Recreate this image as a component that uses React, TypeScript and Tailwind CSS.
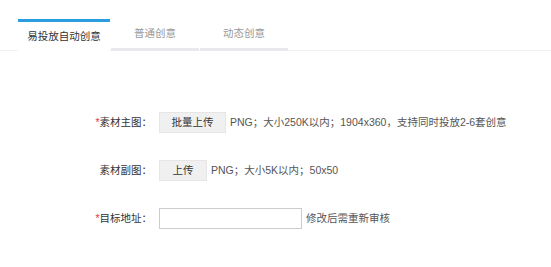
import React from "react";

const font = { fontFamily: '"Liberation Sans", "Noto Sans CJK SC", sans-serif' };

function Row({ label, required, children }: { label: string; required?: boolean; children: React.ReactNode }) {
  return (
    <div className="flex items-center h-[21px]">
      <div className="w-[152px] text-right text-[10.5px] text-[#333] leading-none">
        {required && <span className="text-[#e4393c]">*</span>}
        {label}：
      </div>
      <div className="ml-[7px] flex items-center h-full">{children}</div>
    </div>
  );
}

export default function App() {
  return (
    <div className="w-[551px] h-[267px] bg-white" style={font}>
      <div className="pt-[19px] pl-[18px] flex items-end border-b border-[#f2f2f4]">
        <div className="w-[92px] h-[32px] border-t-[3px] border-[#2a9ee0] flex items-center justify-center text-[10.5px] text-[#333] -mb-px bg-white">
          易投放自动创意
        </div>
        <div className="ml-px w-[88px] h-[32px] border-b-[3px] border-[#e8e8ee] flex items-center justify-center text-[10.5px] text-[#999] -mb-px">
          普通创意
        </div>
        <div className="ml-px w-[88px] h-[32px] border-b-[3px] border-[#e8e8ee] flex items-center justify-center text-[10.5px] text-[#999] -mb-px">
          动态创意
        </div>
      </div>
      <div className="pt-[61px] flex flex-col gap-[27px]">
        <Row label="素材主图" required>
          <button className="w-[67px] h-[21px] bg-[#f0f0f0] border border-[#e6e6e6] text-[10.5px] text-[#333]">批量上传</button>
          <span className="ml-[4px] text-[10.5px] text-[#555]">PNG；大小250K以内；1904x360，支持同时投放2-6套创意</span>
        </Row>
        <Row label="素材副图">
          <button className="w-[48px] h-[21px] bg-[#f0f0f0] border border-[#e6e6e6] text-[10.5px] text-[#333]">上传</button>
          <span className="ml-[4px] text-[10.5px] text-[#555]">PNG；大小5K以内；50x50</span>
        </Row>
        <Row label="目标地址" required>
          <input className="w-[143px] h-[21px] border border-[#ccc] outline-none" />
          <span className="ml-[4px] text-[10.5px] text-[#555]">修改后需重新审核</span>
        </Row>
      </div>
    </div>
  );
}
